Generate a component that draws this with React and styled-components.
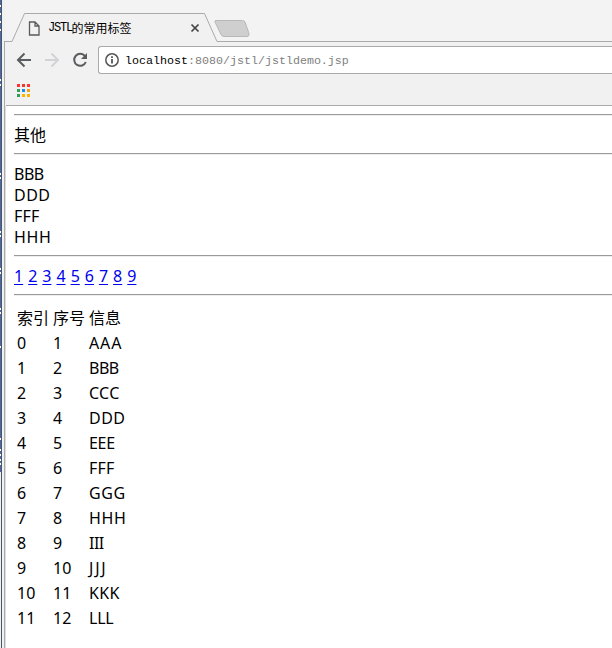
import React from "react";
import styled, { createGlobalStyle } from "styled-components";

const Global = createGlobalStyle`
  * { box-sizing: border-box; }
  html, body { margin: 0; background: #fff; }
  body { width: 612px; height: 648px; overflow: hidden; }
`;

const Desktop = styled.div`
  display: flex;
  width: 612px;
  height: 648px;
  overflow: hidden;
  background: #f2f2f2;
`;

const Strip = styled.svg`
  flex: none;
  width: 6px;
  height: 648px;
`;

const Window = styled.main`
  flex: 1;
  min-width: 0;
  display: flex;
  flex-direction: column;
`;

const TabBar = styled.header`
  position: relative;
  height: 42px;
  flex: none;
  background: #f3f3f3;
`;

const TabShape = styled.svg`
  position: absolute;
  left: -2px;
  top: 0;
  width: 608px;
  height: 42px;
`;

const TabContent = styled.div`
  position: relative;
  display: flex;
  align-items: center;
  height: 28px;
  width: 196px;
  margin-left: 22px;
  top: 14px;
`;

const PageIcon = styled.svg`
  width: 12px;
  height: 15px;
  flex: none;
`;

const TabTitle = styled.span`
  margin-left: 8px;
  width: 142px;
  display: flex;
  align-items: center;
  font: 12px/16px "Noto Sans CJK SC", sans-serif;
  color: #000;
  white-space: nowrap;
`;

const Latin = styled.span`
  width: 23.5px;
  font: 12px/16px "Liberation Mono", monospace;
  letter-spacing: -1.2px;
`;

const CloseIcon = styled.svg`
  width: 10px;
  height: 10px;
`;

const Toolbar = styled.div`
  display: flex;
  align-items: center;
  height: 36px;
  flex: none;
  padding-left: 10px;
  background: #f1f1f1;
`;

const NavIcon = styled.svg`
  width: 16px;
  height: 16px;
  margin-right: 12px;
  flex: none;
`;

const AddressBar = styled.div`
  display: flex;
  align-items: center;
  flex: 1;
  height: 28px;
  margin-left: -2px;
  padding-left: 6px;
  border: 1px solid #aaa;
  border-right: 0;
  border-radius: 3px 0 0 3px;
  background: #fff;
`;

const InfoIcon = styled.svg`
  width: 14px;
  height: 14px;
  flex: none;
`;

const Url = styled.span`
  margin-left: 6px;
  padding-top: 2px;
  font: 11.67px/16px "Liberation Mono", monospace;
  color: #808080;
  white-space: pre;
`;

const Host = styled.span`
  color: #000;
`;

const Bookmarks = styled.div`
  height: 28px;
  flex: none;
  padding: 6px 0 0 11px;
  border-bottom: 1px solid #aaa;
  background: #f1f1f1;
`;

const AppsGrid = styled.div`
  display: grid;
  grid-template-columns: repeat(3, 3px);
  grid-auto-rows: 3px;
  gap: 2px;
`;

const AppDot = styled.i`
  background: ${(p) => p.$color};
`;

const Page = styled.section`
  flex: 1;
  padding: 8px 0 0 8px;
  background: #fff;
  color: #000;
  font: 16px/21px "Noto Sans", "Noto Sans CJK SC", sans-serif;
`;

const Rule = styled.hr`
  height: 2px;
  margin: 0;
  border: 0;
  border-top: 1px solid #9a9a9a;
  border-bottom: 1px solid #eee;
`;

const Lines = styled.div`
  padding: 9px 0 7px;
`;

const Line = styled.div`
  height: 21px;
  letter-spacing: ${(p) => p.$tracking || 0}px;
`;

const Links = styled.nav`
  display: flex;
  gap: 5px;
  height: 37px;
  padding-top: 9px;
`;

const PageLink = styled.a`
  color: #0000ee;
  text-decoration: underline;
  text-underline-offset: 2px;
`;

const Table = styled.div`
  display: grid;
  grid-template-columns: 36px 36px 60px;
  grid-auto-rows: 25px;
  line-height: 25px;
  padding: 10px 0 0 3px;
`;

const Cell = styled.span`
  white-space: nowrap;
  letter-spacing: ${(p) => p.$tracking || 0}px;
`;

const dots = ["#f33", "#f4352c", "#f33", "#2f9e5b", "#1e88f5", "#f0a010", "#2f9e5b", "#fbb500", "#fbb500"];
const letters = "ABCDEFGHIJKL".split("");
const tracking = { A: 0.9, B: -0.5, C: 0.3, D: 0.5, E: -0.3, F: 0.2, G: 0.6, H: 0.6, I: -0.5, J: 1.8, K: 0.3, L: -0.2 };
const marks = [5, 13, 21, 29, 79, 84, 173, 177, 231, 235, 268, 272, 308, 312, 346, 438, 449, 454, 459, 463];

export default function App() {
  return (
    <>
      <Global />
      <Desktop>
        <Strip viewBox="0 0 6 648" shapeRendering="crispEdges">
          <rect width="6" height="648" fill="#f1f1f1" />
          <rect width="1" height="472" fill="#4a69a8" />
          {marks.map((y) => <rect key={y} y={y} width="1" height="2" fill="#fff" />)}
          <rect x="1" width="1" height="648" fill="#4d5466" />
          <rect x="4" y="42" width="1" height="606" fill="#aaa" />
          <rect x="5" y="106" width="1" height="542" fill="#ddd" />
        </Strip>
        <Window>
          <TabBar>
            <TabShape viewBox="0 0 608 42" fill="none">
              <path d="M0 41.5H8L20.5 13.5H200.5L213 41.5H608V42H0Z" fill="#f1f1f1" />
              <path d="M0 41.5H8L20.5 13.5H200.5L213 41.5H608" stroke="#aaa" />
              <path d="M212 20.5H238.5Q240 20.5 241 22L245 33.5Q245.500 36.500 243 36.500H220Q218 36.500 217 34.500L211 22Q210.500 20.500 212 20.500Z" fill="#cfcfcf" stroke="#b8b8b8" />
            </TabShape>
            <TabContent>
              <PageIcon viewBox="0 0 12 15" fill="none" stroke="#5a5a5a" strokeWidth="1.3">
                <path d="M1.500 1H7L11 5V14H1.500ZM7 1V5H11" />
              </PageIcon>
              <TabTitle><Latin>JSTL</Latin>的常用标签</TabTitle>
              <CloseIcon viewBox="0 0 10 10" stroke="#444" strokeWidth="1.7">
                <path d="M1.500 1.500L8.500 8.500M8.500 1.500L1.500 8.500" />
              </CloseIcon>
            </TabContent>
          </TabBar>
          <Toolbar>
            <NavIcon viewBox="0 0 16 16" fill="none" stroke="#5a5c60" strokeWidth="2">
              <path d="M15 8H2.500M8.500 1.500L2 8L8.500 14.500" />
            </NavIcon>
            <NavIcon viewBox="0 0 16 16" fill="none" stroke="#d2d3d5" strokeWidth="2">
              <path d="M1 8H13.500M7.500 1.500L14 8L7.500 14.500" />
            </NavIcon>
            <NavIcon viewBox="0 0 16 16" fill="none" stroke="#5a5c60" strokeWidth="2">
              <path d="M13 4.200A6 6 0 1 0 13.800 10" />
              <path d="M15 1V7H9Z" fill="#5a5c60" stroke="none" />
            </NavIcon>
            <AddressBar>
              <InfoIcon viewBox="0 0 14 14" fill="none" stroke="#555" strokeWidth="1.5">
                <circle cx="7" cy="7" r="6.200" />
                <path d="M7 6V10.500M7 3.300V5" strokeWidth="1.800" />
              </InfoIcon>
              <Url><Host>localhost</Host>:8080/jstl/jstldemo.jsp</Url>
            </AddressBar>
          </Toolbar>
          <Bookmarks>
            <AppsGrid>{dots.map((c, i) => <AppDot key={i} $color={c} />)}</AppsGrid>
          </Bookmarks>
          <Page>
            <Rule />
            <Lines><Line>其他</Line></Lines>
            <Rule />
            <Lines>
              {["B", "D", "F", "H"].map((l) => <Line key={l} $tracking={tracking[l]}>{l.repeat(3)}</Line>)}
            </Lines>
            <Rule />
            <Links>
              {[1, 2, 3, 4, 5, 6, 7, 8, 9].map((n) => <PageLink key={n} href="#">{n}</PageLink>)}
            </Links>
            <Rule />
            <Table>
              <Cell>索引</Cell><Cell>序号</Cell><Cell>信息</Cell>
              {letters.map((l, i) => (
                <React.Fragment key={l}>
                  <Cell>{i}</Cell>
                  <Cell>{i + 1}</Cell>
                  <Cell $tracking={tracking[l]}>{l.repeat(3)}</Cell>
                </React.Fragment>
              ))}
            </Table>
          </Page>
        </Window>
      </Desktop>
    </>
  );
}
